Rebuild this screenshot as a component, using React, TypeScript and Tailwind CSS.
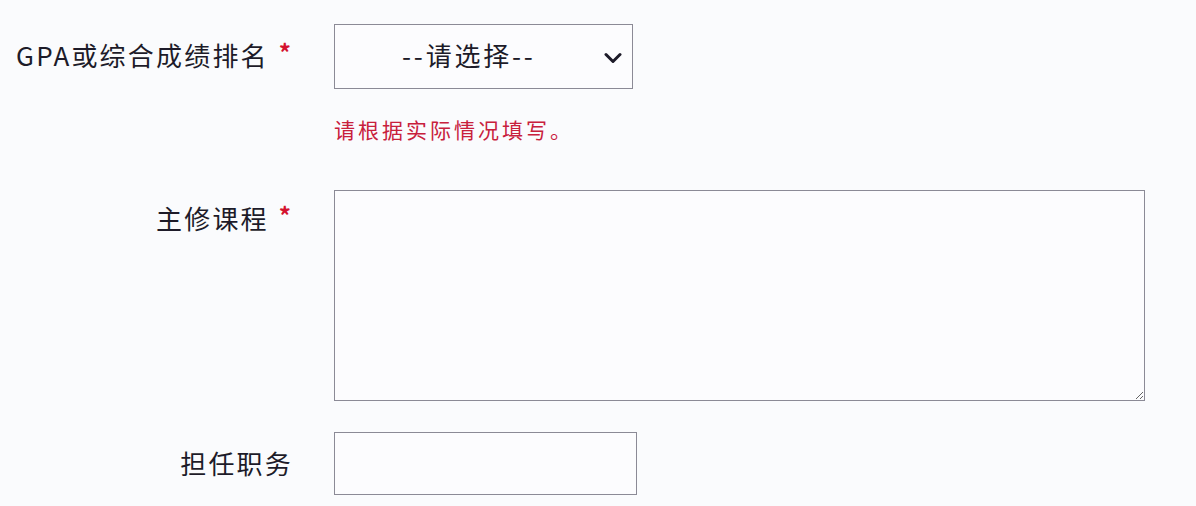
const font = { fontFamily: '"Noto Sans CJK SC", "Noto Sans", sans-serif' };

const Star = () => (
  <span className="ml-[12px] text-[24px] font-bold leading-none text-[#d4122e] -translate-y-[3px]">*</span>
);

const App = () => {
  return (
    <div className="min-h-[506px] w-[1196px] bg-[#fafbfd] text-[#1d1b29]" style={font}>
      <div className="grid grid-cols-[291px_1fr] gap-x-[43px] pt-[24px]">
        {/* GPA */}
        <div className="flex h-[65px] items-center justify-end pb-[4px]">
          <span className="mr-[-2px] text-[26px] leading-[32px] tracking-[2.2px]">GPA或综合成绩排名</span>
          <Star />
        </div>
        <div className="flex h-[65px] w-[299px] items-center border border-[#8b8a96] bg-[#fcfcfe] pl-[67px] pr-[10px]">
          <span className="flex-1 pb-[3px] text-[26px] leading-[32px] tracking-[2.8px]">--请选择--</span>
          <svg width="18" height="12" viewBox="0 0 18 12" fill="none" className="mt-[2px]">
            <path d="M2 2.5 L9 9.5 L16 2.5" stroke="#1d1b29" strokeWidth="3" strokeLinecap="round" strokeLinejoin="round" />
          </svg>
        </div>

        <div />
        <p className="mt-[28px] text-[21px] leading-[24px] tracking-[3px] text-[#c8203c]">请根据实际情况填写。</p>

        {/* 主修课程 */}
        <div className="mt-[49px] flex h-[56px] items-center justify-end">
          <span className="mr-[-2px] text-[26px] leading-[32px] tracking-[2.2px]">主修课程</span>
          <Star />
        </div>
        <textarea className="mt-[49px] block h-[211px] w-[811px] resize border border-[#8b8a96] bg-[#fcfcfe] outline-none" />

        {/* 担任职务 */}
        <div className="mt-[31px] flex h-[63px] items-center justify-end pb-[2px]">
          <span className="mr-[-2px] text-[26px] leading-[32px] tracking-[2.2px]">担任职务</span>
        </div>
        <input type="text" className="mt-[31px] block h-[63px] w-[303px] border border-[#8b8a96] bg-[#fcfcfe] outline-none" />
      </div>
    </div>
  );
};

export default App;
